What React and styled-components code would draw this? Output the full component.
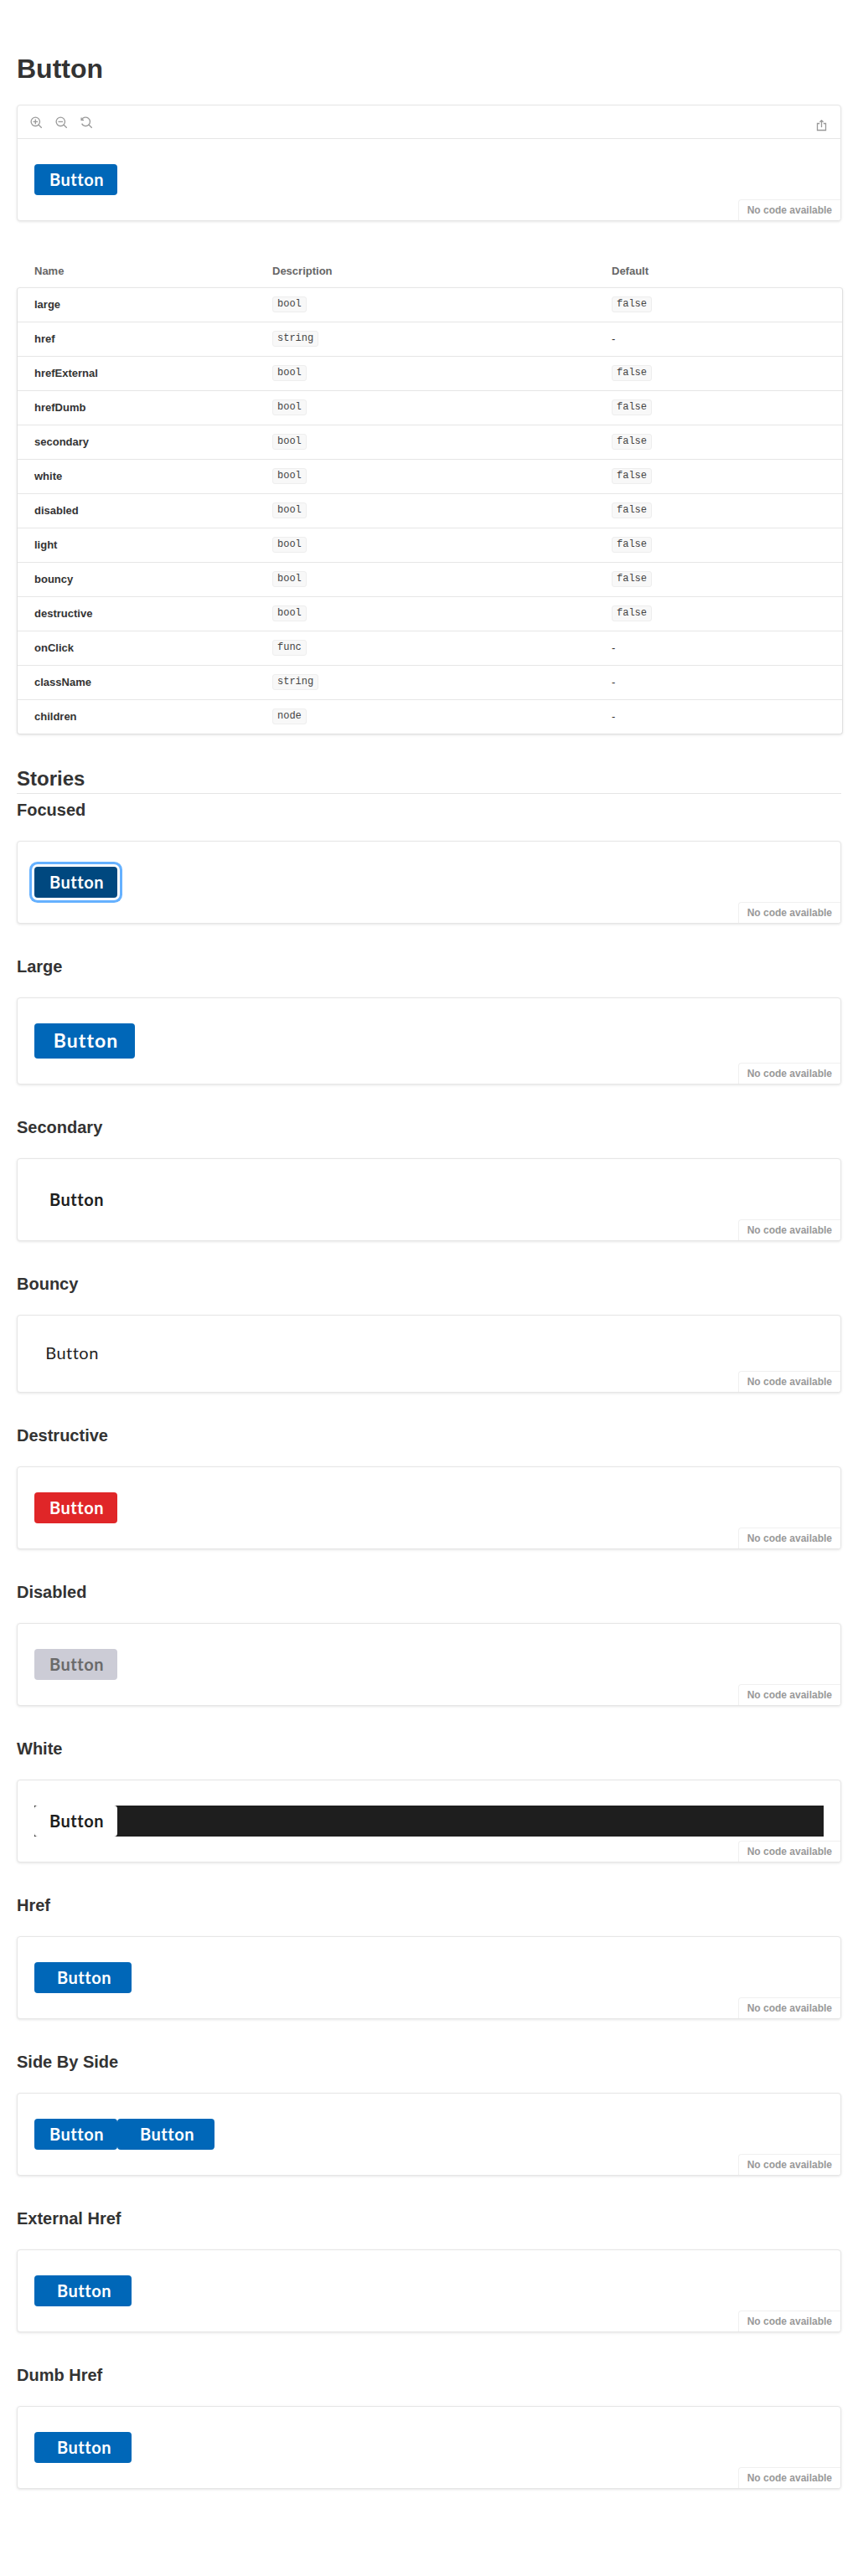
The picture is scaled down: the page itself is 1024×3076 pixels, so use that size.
import React from 'react';
import styled, { createGlobalStyle } from 'styled-components';

const Global = createGlobalStyle`
  * { box-sizing: border-box; }
  body {
    margin: 0;
    background: #fff;
    color: #333;
    font-family: "Liberation Sans", Arial, sans-serif;
    font-size: 13px;
    -webkit-font-smoothing: antialiased;
  }
`;

const Page = styled.main`
  padding: 64px 20px;
`;
const Title = styled.h1`
  margin: 0 0 25px;
  font-size: 32px;
  line-height: 36px;
`;
const StoriesTitle = styled.h2`
  margin: 39px 0 8px;
  padding-bottom: 3px;
  border-bottom: 1px solid #e5e5e5;
  font-size: 24px;
  line-height: 28px;
`;
const StoryTitle = styled.h3`
  margin: 0 0 25px;
  font-size: 20px;
  line-height: 23px;
`;
const Card = styled.section`
  position: relative;
  margin-bottom: 40px;
  border: 1px solid #e6e6e6;
  border-radius: 4px;
  background: #fff;
  box-shadow: rgba(0, 0, 0, 0.1) 0 1px 3px 0;
  overflow: hidden;
`;
const Toolbar = styled.div`
  display: flex;
  justify-content: space-between;
  height: 40px;
  padding: 0 15px;
  border-bottom: 1px solid #e6e6e6;
  color: #999;
`;
const Tools = styled.div`
  display: flex;
  align-items: flex-start;
  gap: 16px;
  padding-top: 13px;
`;
const ShareSlot = styled.div`
  display: flex;
  align-items: flex-start;
  padding-top: 17px;
`;
const Icon = styled.svg`
  display: block;
  width: 14px;
  height: 14px;
  fill: none;
  stroke: currentColor;
  stroke-width: 1.3;
`;
const Canvas = styled.div`
  display: flex;
  padding: 30px 20px;
`;
const Dark = styled.div`
  display: flex;
  flex: 1;
  background: #1e1e1e;
`;
const CodeTag = styled.div`
  position: absolute;
  right: 0;
  bottom: 0;
  height: 25px;
  padding: 4px 10px 0;
  border: solid #f0f0f0;
  border-width: 1px 0 0 1px;
  border-top-left-radius: 4px;
  background: #fff;
  color: #999;
  font-size: 12px;
  font-weight: 700;
  line-height: 16px;
`;

const tones = {
  primary: ['#0067b8', '#fff'],
  focused: ['#00487f', '#fff'],
  secondary: ['#fff', '#1e1e1e'],
  destructive: ['#e02628', '#fff'],
  disabled: ['#ccccd6', '#6a6a6a'],
};
const Button = styled.button`
  display: flex;
  justify-content: center;
  width: ${(p) => (p.$large ? 120 : p.$wide ? 116 : 99)}px;
  height: ${(p) => (p.$large ? 42 : 37)}px;
  padding: 0 0 0 ${(p) => (p.$wide || p.$large ? 3 : 2)}px;
  border: 0;
  border-radius: 4px;
  background: ${(p) => tones[p.$tone || 'primary'][0]};
  color: ${(p) => tones[p.$tone || 'primary'][1]};
  font-family: Lato, sans-serif;
  font-size: ${(p) => (p.$large ? 23 : 20)}px;
  font-weight: 700;
  letter-spacing: ${(p) => (p.$large ? 1.1 : 0.5)}px;
  line-height: ${(p) => (p.$large ? 40 : 37)}px;
  ${(p) => p.$tone === 'focused' && 'box-shadow: 0 0 0 3px #fff, 0 0 0 6px #65b1ff;'}
`;
const BouncyButton = styled(Button)`
  width: 89px;
  height: 31px;
  padding: 0 0 2px 1px;
  background: none;
  color: #1e1e1e;
  font-weight: 400;
  letter-spacing: 0.5px;
  line-height: 29px;
`;

const columns = '284px 405px 1fr';
const PropsTable = styled.div`
  width: 986px;
  padding-top: 12px;
`;
const HeadRow = styled.div`
  display: grid;
  grid-template-columns: ${columns};
  height: 27px;
  padding-left: 21px;
  color: #666;
  font-weight: 700;
  line-height: 15px;
`;
const Body = styled.div`
  border: 1px solid #e0e0e0;
  border-top-color: #e6e6e6;
  border-radius: 4px;
  background: #fff;
  box-shadow: rgba(0, 0, 0, 0.1) 0 1px 3px 0;
`;
const Row = styled.div`
  display: grid;
  grid-template-columns: ${columns};
  align-items: center;
  height: 40px;
  padding: 0 0 1px 20px;
  line-height: 19px;
  & + & {
    height: 41px;
    border-top: 1px solid #e6e6e6;
  }
`;
const Name = styled.strong`
  font-weight: 700;
`;
const Code = styled.code`
  justify-self: start;
  height: 19px;
  padding: 0 5px;
  border: 1px solid #eee;
  border-radius: 3px;
  background: #f8f8f8;
  color: #444;
  font-family: "Liberation Mono", monospace;
  font-size: 12px;
  line-height: 16px;
`;

const rows = [
  ['large', 'bool', 'false'],
  ['href', 'string'],
  ['hrefExternal', 'bool', 'false'],
  ['hrefDumb', 'bool', 'false'],
  ['secondary', 'bool', 'false'],
  ['white', 'bool', 'false'],
  ['disabled', 'bool', 'false'],
  ['light', 'bool', 'false'],
  ['bouncy', 'bool', 'false'],
  ['destructive', 'bool', 'false'],
  ['onClick', 'func'],
  ['className', 'string'],
  ['children', 'node'],
];

const stories = [
  ['Focused', <Button $tone="focused">Button</Button>],
  ['Large', <Button $large>Button</Button>],
  ['Secondary', <Button $tone="secondary">Button</Button>],
  ['Bouncy', <BouncyButton>Button</BouncyButton>],
  ['Destructive', <Button $tone="destructive">Button</Button>],
  ['Disabled', <Button $tone="disabled">Button</Button>],
  ['White', <Dark><Button $tone="secondary">Button</Button></Dark>],
  ['Href', <Button $wide>Button</Button>],
  ['Side By Side', <><Button>Button</Button><Button $wide>Button</Button></>],
  ['External Href', <Button $wide>Button</Button>],
  ['Dumb Href', <Button $wide>Button</Button>],
];

function Preview({ toolbar, children }) {
  return (
    <Card>
      {toolbar}
      <Canvas>{children}</Canvas>
      <CodeTag>No code available</CodeTag>
    </Card>
  );
}

function PreviewToolbar() {
  return (
    <Toolbar>
      <Tools>
        <Icon viewBox="0 0 14 14">
          <circle cx="6.3" cy="6.3" r="5.2" />
          <path d="M10 10l3.8 3.8M3.5 6.4h5.6M6.3 3.6v5.6" />
        </Icon>
        <Icon viewBox="0 0 14 14">
          <circle cx="6.3" cy="6.3" r="5.2" />
          <path d="M10 10l3.8 3.8M3.5 6.4h5.6" />
        </Icon>
        <Icon viewBox="0 0 14 14">
          <path d="M1.6 4A5.2 5.2 0 1 1 1.6 8.6M1.1 1.6v2.8h2.9M10 10l3.8 3.8" />
        </Icon>
      </Tools>
      <ShareSlot>
        <Icon viewBox="0 0 14 14">
          <path d="M4.2 4.5H1.5v8h10v-8H8.8M6.5 9V1M4.4 2.7l2.1-2 2.1 2" />
        </Icon>
      </ShareSlot>
    </Toolbar>
  );
}

export default function App() {
  return (
    <>
      <Global />
      <Page>
        <Title>Button</Title>
        <Preview toolbar={<PreviewToolbar />}>
          <Button>Button</Button>
        </Preview>
        <PropsTable>
          <HeadRow>
            <span>Name</span>
            <span>Description</span>
            <span>Default</span>
          </HeadRow>
          <Body>
            {rows.map(([name, type, def]) => (
              <Row key={name}>
                <Name>{name}</Name>
                <Code>{type}</Code>
                {def ? <Code>{def}</Code> : <span>-</span>}
              </Row>
            ))}
          </Body>
        </PropsTable>
        <StoriesTitle>Stories</StoriesTitle>
        {stories.map(([name, content]) => (
          <React.Fragment key={name}>
            <StoryTitle>{name}</StoryTitle>
            <Preview>{content}</Preview>
          </React.Fragment>
        ))}
      </Page>
    </>
  );
}
